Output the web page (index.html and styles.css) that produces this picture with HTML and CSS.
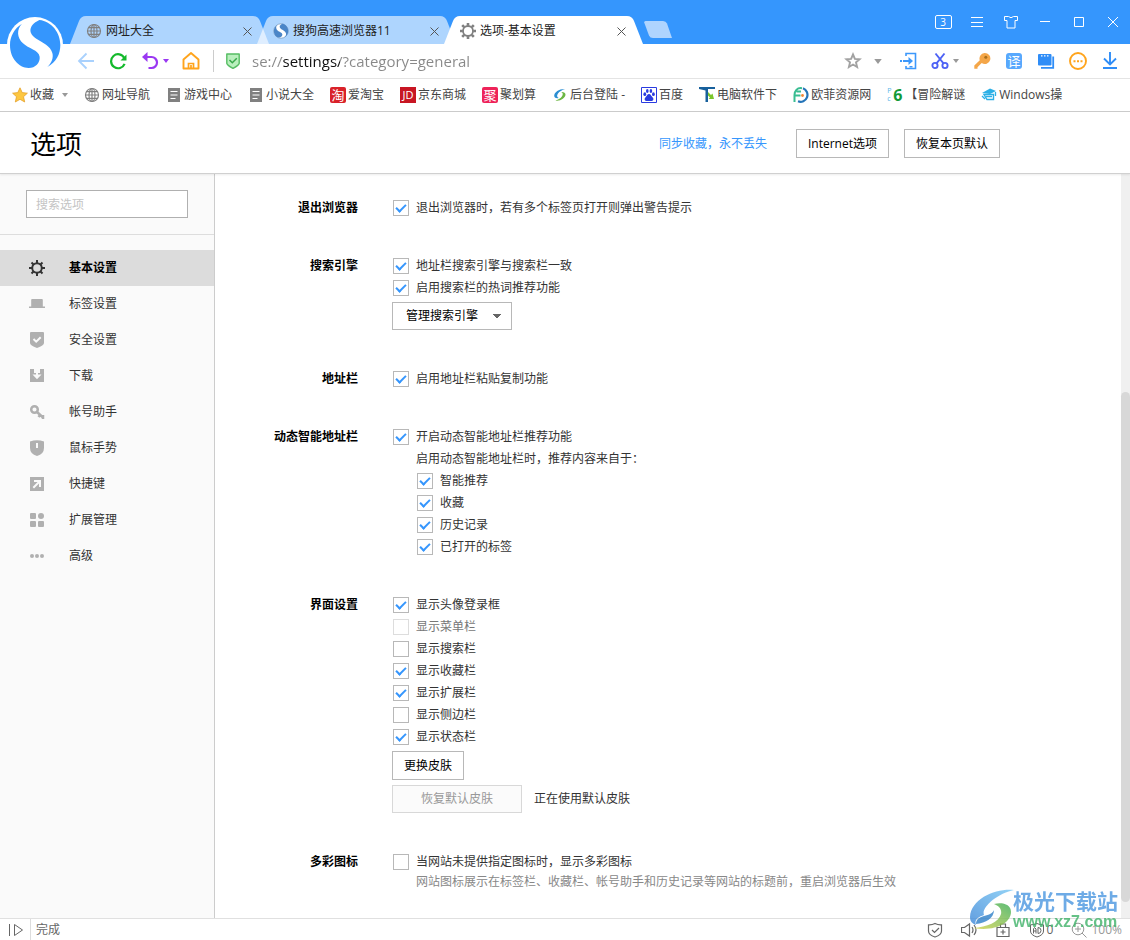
FILE: index.html
```html
<!DOCTYPE html>
<html lang="zh-CN">
<head>
<meta charset="utf-8">
<title>选项-基本设置</title>
<link rel="stylesheet" href="styles.css">
</head>
<body>
<div class="browser">
  <header class="titlebar">
    <svg class="brand" viewBox="0 0 168 168" aria-hidden="true">
      <circle cx="84" cy="84" r="84" fill="#fff"/>
      <path d="M45 20C22 34 9 58 9 84c0 40 26 68 56 69 20 0 35-16 33-34-3-20-34-24-50-40C30 62 28 38 45 20z" fill="#3596fd"/>
      <path d="M97 9c37 4 63 38 63 75 0 27-12 52-39 66 13-12 19-28 15-42-6-22-28-30-48-43-22-13-28-38 9-56z" fill="#3596fd"/>
    </svg>
    <nav class="tabs" aria-label="标签页">
      <div class="tab">
        <svg class="tab-shape" viewBox="0 0 199 28" preserveAspectRatio="none"><path d="M0 28L9 5Q11 0 16 0H183Q188 0 190 5L199 28z"/></svg>
        <svg class="i16 grey" viewBox="0 0 16 16"><g fill="none" stroke="currentColor" stroke-width="1.200"><circle cx="8" cy="8" r="6.500"/><ellipse cx="8" cy="8" rx="3" ry="6.500"/><path d="M8 1.500v13M1.500 8h13M2.500 4.600h11M2.500 11.400h11"/></g></svg>
        <span class="tab-title">网址大全</span>
        <button class="tab-close" aria-label="关闭标签"><svg viewBox="0 0 9 9"><path d="M.5.5l8 8M8.500.5l-8 8"/></svg></button>
      </div>
      <div class="tab">
        <svg class="tab-shape" viewBox="0 0 199 28" preserveAspectRatio="none"><path d="M0 28L9 5Q11 0 16 0H183Q188 0 190 5L199 28z"/></svg>
        <svg class="i16" viewBox="0 0 168 168"><circle cx="84" cy="84" r="76" fill="#fff" stroke="#7d9cc0" stroke-width="8"/><path d="M45 20C22 34 9 58 9 84c0 40 26 68 56 69 20 0 35-16 33-34-3-20-34-24-50-40C30 62 28 38 45 20z" fill="#4b86c8"/><path d="M97 9c37 4 63 38 63 75 0 27-12 52-39 66 13-12 19-28 15-42-6-22-28-30-48-43-22-13-28-38 9-56z" fill="#4b86c8"/></svg>
        <span class="tab-title">搜狗高速浏览器11</span>
        <button class="tab-close" aria-label="关闭标签"><svg viewBox="0 0 9 9"><path d="M.5.5l8 8M8.500.5l-8 8"/></svg></button>
      </div>
      <div class="tab active">
        <svg class="tab-shape" viewBox="0 0 199 28" preserveAspectRatio="none"><path d="M0 28L9 5Q11 0 16 0H183Q188 0 190 5L199 28z"/></svg>
        <svg class="i16 grey" viewBox="0 0 16 16"><g fill="none" stroke="currentColor"><circle cx="8" cy="8" r="5" stroke-width="1.800"/><path stroke-width="2.600" d="M8 0v2.800M8 13.200V16M0 8h2.800M13.200 8H16M2.200 2.200l2 2M11.800 11.800l2 2M13.800 2.200l-2 2M4.200 11.800l-2 2"/></g></svg>
        <span class="tab-title">选项-基本设置</span>
        <button class="tab-close" aria-label="关闭标签"><svg viewBox="0 0 9 9"><path d="M.5.5l8 8M8.500.5l-8 8"/></svg></button>
      </div>
      <button class="new-tab" aria-label="新建标签"><svg viewBox="0 0 28 17"><path d="M1.500 0H19q3 0 4 2.500L28 17H9q-3 0-4-2.500L.2 1.500Q0 0 1.500 0z" fill="#afd4fe"/></svg></button>
    </nav>
    <div class="window-controls">
      <button class="win-btn" aria-label="标签数"><span class="count">3</span></button>
      <button class="win-btn" aria-label="菜单"><svg viewBox="0 0 16 16"><path d="M2 3.500h12M2 8.500h12M2 12.500h12"/></svg></button>
      <button class="win-btn" aria-label="皮肤"><svg viewBox="0 0 16 16"><path d="M1.500 2.500h4q2.500 2.500 5 0h4v4h-2.500v7.500H4V6.500H1.500z"/></svg></button>
      <button class="win-btn" aria-label="最小化"><svg viewBox="0 0 16 16"><path d="M3 7.500h10"/></svg></button>
      <button class="win-btn" aria-label="最大化"><svg viewBox="0 0 16 16"><path d="M3.500 3.500h9v9h-9z"/></svg></button>
      <button class="win-btn" aria-label="关闭"><svg viewBox="0 0 16 16"><path d="M3 3l10 10M13 3L3 13"/></svg></button>
    </div>
  </header>

  <div class="toolbar">
    <div class="nav-buttons">
      <button class="tool" aria-label="后退"><svg viewBox="0 0 18 18"><path d="M9.500 1.500L2 9l7.500 7.500M2 9h15" fill="none" stroke="#a9d1fd" stroke-width="1.800"/></svg></button>
      <button class="tool" aria-label="刷新"><svg viewBox="0 0 18 18"><path d="M15.300 6A7 7 0 1 0 15.600 11.800" fill="none" stroke="#13b92b" stroke-width="2.200"/><path d="M17.500 2.500v6h-6z" fill="#13b92b"/></svg></button>
      <div class="tool-pair">
        <button class="tool" aria-label="撤销"><svg viewBox="0 0 18 18"><path d="M3 5h7.500a5.500 5.500 0 0 1 0 11H7.500" fill="none" stroke="#9a38f2" stroke-width="2.200"/><path d="M6.500 0L1 5l5.500 5z" fill="#9a38f2"/></svg></button>
        <svg class="caret purple" viewBox="0 0 6 4"><path d="M0 0h6L3 4z"/></svg>
      </div>
      <button class="tool" aria-label="主页"><svg viewBox="0 0 18 18"><path d="M1.500 7.500L9 1l7.500 6.500v9h-15z" fill="none" stroke="#ffa41c" stroke-width="1.900" stroke-linejoin="round"/><path d="M6.500 16.500v-5h5v5M9 13v3.500" fill="none" stroke="#ffa41c" stroke-width="1.700"/></svg></button>
    </div>
    <label class="address">
      <svg class="i16" viewBox="0 0 16 16"><path d="M1.800 1h12.400v9.300Q14 12 8 15.300 2 12 1.800 10.300z" fill="#b9efbd" stroke="#56bd63" stroke-width="1.400" stroke-linejoin="round"/><path d="M4.500 7l2.800 2.800 4.500-4.500" fill="none" stroke="#38a84b" stroke-width="1.500"/></svg>
      <input class="url" type="text" aria-label="地址" value="se://settings/?category=general">
    </label>
    <div class="tool-actions">
      <div class="tool-pair star-pair">
        <button class="tool" aria-label="收藏"><svg viewBox="0 0 18 18"><path d="M9 2.500l1.900 4.400 4.700.4-3.600 3.100 1.100 4.600L9 12.500 4.900 15 6 10.400 2.400 7.300l4.700-.4z" fill="none" stroke="#a2a2a2" stroke-width="1.900"/></svg></button>
        <svg class="caret wide" viewBox="0 0 6 4"><path d="M0 0h6L3 4z"/></svg>
      </div>
      <button class="tool" aria-label="发送到手机"><svg viewBox="0 0 18 18"><path d="M7 4V1.500h9.500v15H7V14" fill="none" stroke="#3c98fb" stroke-width="1.600"/><path d="M1 9h2m1 0h7" stroke="#3c98fb" stroke-width="2"/><path d="M9.500 5v8L14 9zM10.500 14h3v1.500h-3z" fill="#3c98fb"/></svg></button>
      <div class="tool-pair">
        <button class="tool" aria-label="截图"><svg viewBox="0 0 18 18"><g fill="none" stroke="#4d62f5" stroke-width="1.900"><circle cx="4" cy="13.500" r="2.600"/><circle cx="14" cy="13.500" r="2.600"/><path d="M12.500 11.300L4.500 1.500M5.500 11.300l8-9.800"/></g></svg></button>
        <svg class="caret" viewBox="0 0 6 4"><path d="M0 0h6L3 4z"/></svg>
      </div>
      <button class="tool" aria-label="密码"><svg viewBox="0 0 18 18"><path d="M11.500 1a5.500 5.500 0 1 1-2.800 10L4.500 15.300v1.400H1.300v-3.200L6.800 8.300A5.500 5.500 0 0 1 11.500 1z" fill="#f4a649"/><circle cx="12.800" cy="5.200" r="1.500" fill="#a86f1c"/></svg></button>
      <button class="tool" aria-label="翻译"><span class="translate">译</span></button>
      <button class="tool" aria-label="多窗口"><svg viewBox="0 0 18 18"><rect x="1" y="2" width="13.500" height="11.500" rx="1" fill="#2f8df7"/><path d="M4 3.800h1.500M7 3.800h1.500M10 3.800h1.500" stroke="#fff" stroke-width="1.300"/><path d="M16.200 4.500v11.300H4" fill="none" stroke="#2f8df7" stroke-width="1.800"/></svg></button>
      <button class="tool" aria-label="更多"><svg viewBox="0 0 18 18"><circle cx="9" cy="9" r="8" fill="none" stroke="#ffa41c" stroke-width="1.900"/><path d="M4.500 8.200h2v2h-2zM8 8.200h2v2H8zM11.500 8.200h2v2h-2z" fill="#ffa41c"/></svg></button>
      <button class="tool" aria-label="下载"><svg viewBox="0 0 18 18"><path d="M9 0v12.500M3 6.500l6 6 6-6M2 16h14" fill="none" stroke="#2f8df7" stroke-width="1.900"/></svg></button>
    </div>
  </div>

  <nav class="bookmarks" aria-label="收藏栏">
    <a class="bookmark favorites" href="#"><svg class="i16" viewBox="0 0 16 16"><path d="M8 .8l2.200 4.800 5.200.6-3.900 3.500 1.200 5.300L8 12.300 3.300 15l1.200-5.300L.6 6.200l5.200-.6z" fill="#fdc741" stroke="#e5a12b" stroke-width=".8"/></svg>收藏<svg class="caret" viewBox="0 0 6 4"><path d="M0 0h6L3 4z"/></svg></a>
    <a class="bookmark" href="#"><svg class="i16 grey" viewBox="0 0 16 16"><g fill="none" stroke="currentColor" stroke-width="1.200"><circle cx="8" cy="8" r="6.500"/><ellipse cx="8" cy="8" rx="3" ry="6.500"/><path d="M8 1.500v13M1.500 8h13M2.500 4.600h11M2.500 11.400h11"/></g></svg>网址导航</a>
    <a class="bookmark" href="#"><svg class="i16 grey" viewBox="0 0 16 16"><path d="M2 1h12v14H2z" fill="currentColor"/><path d="M4.500 4.500h7M4.500 8h7M4.500 11.500h5" stroke="#fff" stroke-width="1.200"/></svg>游戏中心</a>
    <a class="bookmark" href="#"><svg class="i16 grey" viewBox="0 0 16 16"><path d="M2 1h12v14H2z" fill="currentColor"/><path d="M4.500 4.500h7M4.500 8h7M4.500 11.500h5" stroke="#fff" stroke-width="1.200"/></svg>小说大全</a>
    <a class="bookmark" href="#"><span class="badge red">淘</span>爱淘宝</a>
    <a class="bookmark" href="#"><span class="badge jd">JD</span>京东商城</a>
    <a class="bookmark" href="#"><span class="badge pink">聚</span>聚划算</a>
    <a class="bookmark" href="#"><svg class="i16" viewBox="0 0 16 16"><path d="M13 2C8 1.500 2 5 2.200 9c.3 2 2.300 2.500 4.500 2C5 10 4.500 8.500 6 6.500 7.500 4.500 10 3 13 2z" fill="#2b8ed2"/><path d="M3.500 13.500C8 14.500 13.500 11 13.500 7.500c0-2-2-2.800-4.300-2.500 1.800.8 2 2.500.8 4.300-1.300 2-3.500 3.500-6.500 4.200z" fill="#6cb643"/></svg>后台登陆 -</a>
    <a class="bookmark" href="#"><svg class="i16" viewBox="0 0 16 16"><path d="M.5.5h15v15H.5z" fill="#fff" stroke="#2a3be0"/><g fill="#2a3be0"><ellipse cx="3.800" cy="7.200" rx="1.400" ry="1.900"/><ellipse cx="6.300" cy="4" rx="1.300" ry="1.900"/><ellipse cx="9.900" cy="4" rx="1.300" ry="1.900"/><ellipse cx="12.400" cy="7.200" rx="1.400" ry="1.900"/><path d="M8 7c1.700 0 2 1.800 3.300 2.900 2 1.700 1 4-.8 4H5.600c-2 0-2.700-2.300-.9-4C6 8.800 6.400 7 8 7z"/></g></svg>百度</a>
    <a class="bookmark" href="#"><svg class="i16" viewBox="0 0 16 16"><path d="M0 0h16v2H9v13H6.500V3.500L0 2z" fill="#17609c"/><path d="M9 5l3 3 1.500-1.500L15 12H9.500l1.500-1.500-2-2z" fill="#7bc52b"/></svg>电脑软件下</a>
    <a class="bookmark" href="#"><svg class="i16" viewBox="0 0 16 16"><path d="M9 1.200C4 .5 1.500 4 1.500 8v7M1.500 8.500h6M3.500 4.500H8" fill="none" stroke="#39bd91" stroke-width="2"/><path d="M10 1.300a6.800 6.800 0 0 1-5 13" fill="none" stroke="#2474b8" stroke-width="2.200"/><circle cx="9.500" cy="8.500" r="1.400" fill="#f38836"/></svg>欧菲资源网</a>
    <a class="bookmark" href="#"><span class="pc6"><small><span>P</span><span>c</span></small><b>6</b></span>【冒险解谜</a>
    <a class="bookmark" href="#"><svg class="i16" viewBox="0 0 16 16"><path d="M1 6l8-4.500L15 4l-6 3z" fill="#2cb0e6"/><path d="M3 7.500h9.500v5H6z" fill="#fff" stroke="#2cb0e6" stroke-width="1.400"/><path d="M5 9.500h6M1 9l3 3M14.500 5v4" stroke="#2cb0e6" stroke-width="1.300"/></svg>Windows操</a>
  </nav>

  <div class="page-head">
    <h1>选项</h1>
    <a class="sync" href="#">同步收藏，永不丢失</a>
    <button class="btn">Internet选项</button>
    <button class="btn">恢复本页默认</button>
  </div>

  <div class="page">
    <aside class="sidebar">
      <div class="search-box"><input class="search" type="search" aria-label="搜索选项" placeholder="搜索选项"></div>
      <nav class="menu" aria-label="设置分类">
        <a class="item current" href="#"><svg class="i16" viewBox="0 0 16 16"><g fill="none" stroke="currentColor"><circle cx="8" cy="8" r="4.800" stroke-width="2"/><path stroke-width="2" d="M8 0v3M8 13v3M0 8h3M13 8h3M2.500 2.500l2 2M11.500 11.500l2 2M13.500 2.500l-2 2M4.500 11.500l-2 2"/></g></svg>基本设置</a>
        <a class="item" href="#"><svg class="i16" viewBox="0 0 16 16"><path fill="currentColor" d="M3 3h10q.8 0 .8 1v6.500H16V12H0v-1.500h2.200V4q0-1 .8-1z"/></svg>标签设置</a>
        <a class="item" href="#"><svg class="i16" viewBox="0 0 16 16"><path fill="currentColor" d="M2 0h12q1 0 1 1v10q0 2.500-7 5-7-2.500-7-5V1q0-1 1-1z"/><path d="M4.500 7l2.700 2.700 4.500-4.500" fill="none" stroke="#fafafa" stroke-width="2"/></svg>安全设置</a>
        <a class="item" href="#"><svg class="i16" viewBox="0 0 16 16"><path fill="currentColor" d="M1 1h4v4h6V1h4v13H1z"/><path d="M7 1h2v5.500h3.500L8 11.200 3.500 6.500H7z" fill="#fafafa"/></svg>下载</a>
        <a class="item" href="#"><svg class="i16" viewBox="0 0 16 16"><circle cx="5.500" cy="5.500" r="3.300" fill="none" stroke="currentColor" stroke-width="2.500"/><path d="M8 8l6 5.500M11 11l-1.500 2M14 11v4" stroke="currentColor" stroke-width="2.500"/></svg>帐号助手</a>
        <a class="item" href="#"><svg class="i16" viewBox="0 0 16 16"><path fill="currentColor" d="M1 1.500Q8-1 15 1.500V8q0 6-7 8-7-2-7-8z"/><path d="M8 3v5" stroke="#fafafa" stroke-width="2"/></svg>鼠标手势</a>
        <a class="item" href="#"><svg class="i16" viewBox="0 0 16 16"><path fill="currentColor" d="M1 1h14v14H1z"/><path d="M5 4h7v7h-2V7.500l-5 5L3.600 11l5-5H5z" fill="#fafafa"/></svg>快捷键</a>
        <a class="item" href="#"><svg class="i16" viewBox="0 0 16 16"><g fill="currentColor"><rect x="1" y="1" width="6" height="6" rx="1"/><circle cx="12" cy="4" r="3"/><rect x="1" y="9" width="6" height="6" rx="1"/><rect x="9" y="9" width="6" height="6" rx="1"/></g></svg>扩展管理</a>
        <a class="item" href="#"><svg class="i16" viewBox="0 0 16 16"><g fill="currentColor"><circle cx="3" cy="8" r="2"/><circle cx="8" cy="8" r="2"/><circle cx="13" cy="8" r="2"/></g></svg>高级</a>
      </nav>
    </aside>

    <main class="content">
      <section class="group">
        <h2>退出浏览器</h2>
        <div class="fields">
          <label class="check"><input type="checkbox" checked>退出浏览器时，若有多个标签页打开则弹出警告提示</label>
        </div>
      </section>
      <section class="group">
        <h2>搜索引擎</h2>
        <div class="fields">
          <label class="check"><input type="checkbox" checked>地址栏搜索引擎与搜索栏一致</label>
          <label class="check"><input type="checkbox" checked>启用搜索栏的热词推荐功能</label>
          <div class="controls"><select class="engine" aria-label="管理搜索引擎"><option>管理搜索引擎</option></select></div>
        </div>
      </section>
      <section class="group">
        <h2>地址栏</h2>
        <div class="fields">
          <label class="check"><input type="checkbox" checked>启用地址栏粘贴复制功能</label>
        </div>
      </section>
      <section class="group">
        <h2>动态智能地址栏</h2>
        <div class="fields">
          <label class="check"><input type="checkbox" checked>开启动态智能地址栏推荐功能</label>
          <div class="nested">
            <p>启用动态智能地址栏时，推荐内容来自于：</p>
            <label class="check"><input type="checkbox" checked>智能推荐</label>
            <label class="check"><input type="checkbox" checked>收藏</label>
            <label class="check"><input type="checkbox" checked>历史记录</label>
            <label class="check"><input type="checkbox" checked>已打开的标签</label>
          </div>
        </div>
      </section>
      <section class="group">
        <h2>界面设置</h2>
        <div class="fields">
          <label class="check"><input type="checkbox" checked>显示头像登录框</label>
          <label class="check off"><input type="checkbox" disabled>显示菜单栏</label>
          <label class="check"><input type="checkbox">显示搜索栏</label>
          <label class="check"><input type="checkbox" checked>显示收藏栏</label>
          <label class="check"><input type="checkbox" checked>显示扩展栏</label>
          <label class="check"><input type="checkbox">显示侧边栏</label>
          <label class="check"><input type="checkbox" checked>显示状态栏</label>
          <div class="controls">
            <button class="btn">更换皮肤</button>
            <div class="skin-row"><button class="btn restore" disabled>恢复默认皮肤</button><span>正在使用默认皮肤</span></div>
          </div>
        </div>
      </section>
      <section class="group">
        <h2>多彩图标</h2>
        <div class="fields">
          <label class="check"><input type="checkbox">当网站未提供指定图标时，显示多彩图标</label>
          <p class="hint nested">网站图标展示在标签栏、收藏栏、帐号助手和历史记录等网站的标题前，重启浏览器后生效</p>
        </div>
      </section>
    </main>
    <div class="scrollbar" aria-hidden="true"><div class="thumb"></div></div>
  </div>

  <footer class="statusbar">
    <button class="side-toggle" aria-label="侧边栏"><svg class="i16" viewBox="0 0 16 16"><path d="M1.500 2v12M6.500 2.500v11L14.500 8z" fill="none" stroke="currentColor"/></svg></button>
    <span class="state">完成</span>
    <div class="indicators">
      <svg class="i16" viewBox="0 0 16 16"><path d="M8 1.500q3 1.500 6.500 1.300V9q0 4-6.500 6-6.500-2-6.500-6V2.800Q5 3 8 1.500z" fill="none" stroke="currentColor" stroke-width="1.200"/><path d="M5 8l2.500 2.500L12 6" fill="none" stroke="currentColor" stroke-width="1.200"/></svg>
      <svg class="i16" viewBox="0 0 16 16"><path d="M.5 5.500h3L8.500 2v12l-5-3.500h-3zM11 5q2 3 0 6M13 3q4 5 0 10" fill="none" stroke="currentColor" stroke-width="1.200"/></svg>
      <svg class="i16" viewBox="0 0 16 16"><path d="M2 5.500h12v9H2zM5.500 5.500V2h5v3.500M8 7.500v5M5.500 10h5" fill="none" stroke="currentColor" stroke-width="1.200"/></svg>
      <span class="adblock"><svg class="i16" viewBox="0 0 16 16"><path d="M8 1.500q3 1.500 6.500 1.300V9q0 4-6.500 6-6.500-2-6.500-6V2.800Q5 3 8 1.500z" fill="none" stroke="currentColor"/><path d="M4.500 11.500V7l1-1.500L7 7v4.500M4.500 9H7M9 5.500v6q3 0 3-3t-3-3z" fill="none" stroke="currentColor"/></svg>0</span>
      <span class="zoom"><svg class="i16" viewBox="0 0 16 16"><path d="M11 11l4.500 4.500M7 4v6M4 7h6" stroke="currentColor" fill="none"/><circle cx="7" cy="7" r="5.800" fill="none" stroke="currentColor"/></svg>100%</span>
    </div>
  </footer>

  <div class="watermark">
    <svg class="swirl" viewBox="0 0 46 42">
      <defs>
        <linearGradient id="sky" x1="0" y1="1" x2="1" y2="0"><stop offset="0" stop-color="#3b86d8"/><stop offset="1" stop-color="#79c8f4"/></linearGradient>
        <linearGradient id="leaf" x1="0" y1="1" x2="1" y2="0"><stop offset="0" stop-color="#d9d34a"/><stop offset="1" stop-color="#38ad55"/></linearGradient>
      </defs>
      <path d="M45 1C28-1 2 9 1 28c0 5 3 7 6 8-2-5 2-8 8-10-3-7 12-21 30-25z" fill="url(#sky)"/>
      <path d="M25 15c8-2 17 0 17 8 0 11-16 20-38 16 14-1 26-6 28-14 1-5-2-8-7-10z" fill="url(#leaf)"/>
      <path d="M25 21c0 8-8 13-18 14 0-5 4-7 8-8 5-1 9-3 10-6z" fill="#2e7fc9"/>
    </svg>
    <div class="mark-text"><strong>极光下载站</strong><em>www.xz7.com</em></div>
  </div>
</div>
</body>
</html>
```

FILE: styles.css
```css
* {
  box-sizing: border-box;
}

body {
  margin: 0;
  background: #fff;
  color: #333;
  font: 12px/22px "Open Sans", "Noto Sans CJK SC", sans-serif;
}

a {
  color: inherit;
  text-decoration: none;
}

button,
input,
select {
  margin: 0;
  padding: 0;
  border: 0;
  background: none;
  color: inherit;
  font: inherit;
}

h1,
h2,
p {
  margin: 0;
}

svg {
  display: block;
  flex: none;
}

.browser {
  position: relative;
  display: flex;
  flex-direction: column;
  min-height: 100vh;
}

.i16 {
  width: 16px;
  height: 16px;
}

.grey {
  color: #808080;
}

.caret {
  width: 6px;
  height: 4px;
  fill: #999;
}

.caret.wide {
  width: 8px;
  height: 5px;
}

.caret.purple {
  fill: #9a38f2;
}

/* Title bar */

.titlebar {
  position: relative;
  display: flex;
  height: 44px;
  padding-left: 70px;
  background: #3596fd;
}

.brand {
  position: absolute;
  z-index: 2;
  top: 17px;
  left: 7px;
  width: 56px;
  height: 56px;
}

.tabs {
  display: flex;
  flex: 1;
  align-items: flex-end;
}

.tab {
  position: relative;
  display: flex;
  align-items: center;
  width: 199px;
  height: 28px;
  margin-right: -12px;
  padding: 2px 17px 0 16px;
  color: #222;
}

.tab-shape {
  position: absolute;
  top: 0;
  left: 0;
  width: 100%;
  height: 100%;
  fill: rgba(255, 255, 255, 0.6);
}

.tab.active .tab-shape {
  fill: #fff;
}

.tab > :not(.tab-shape) {
  position: relative;
}

.tab-title {
  flex: 1;
  margin-left: 4px;
}

.tab-close {
  width: 9px;
  height: 9px;
}

.tab-close svg {
  width: 9px;
  height: 9px;
  stroke: #555;
}

.new-tab {
  align-self: center;
  width: 28px;
  height: 17px;
  margin: 15px 0 0 13px;
}

.new-tab svg {
  width: 28px;
  height: 17px;
}

.window-controls {
  display: flex;
  color: #fff;
}

.win-btn {
  display: flex;
  align-items: center;
  justify-content: center;
  width: 34px;
  height: 44px;
}

.win-btn svg {
  width: 16px;
  height: 16px;
  fill: none;
  stroke: #fff;
}

.count {
  width: 17px;
  border: 1px solid #fff;
  border-radius: 2px;
  font-size: 10px;
  line-height: 12px;
}

/* Toolbar */

.toolbar {
  display: flex;
  align-items: center;
  height: 35px;
  padding: 0 11px 0 77px;
  border-bottom: 1px solid #e4e4e4;
}

.tool {
  width: 18px;
  height: 18px;
}

.tool svg {
  width: 18px;
  height: 18px;
}

.nav-buttons {
  display: flex;
  align-items: center;
  gap: 14px;
  height: 22px;
  padding-right: 13px;
  border-right: 1px solid #ccc;
}

.tool-pair {
  display: flex;
  align-items: center;
  gap: 4px;
}

.nav-buttons .tool-pair {
  margin-right: -1px;
}

.address {
  display: flex;
  flex: 1;
  align-items: center;
  gap: 11px;
  margin-left: 11px;
}

.url {
  flex: 1;
  min-width: 0;
  height: 22px;
  background: linear-gradient(90deg, #888 30px, #111 30px, #111 88px, #888 88px);
  -webkit-background-clip: text;
  background-clip: text;
  color: #888;
  font-size: 15px;
  outline: 0;
  -webkit-text-fill-color: transparent;
}

.tool-actions {
  display: flex;
  align-items: center;
  gap: 14px;
}

.star-pair {
  gap: 12px;
  margin-right: 3px;
}

.translate {
  display: block;
  width: 16px;
  height: 16px;
  margin: 1px;
  border-radius: 3px;
  background: #58a8fd;
  color: #fff;
  font-size: 13px;
  line-height: 16px;
}

/* Bookmarks */

.bookmarks {
  display: flex;
  align-items: center;
  gap: 16px;
  height: 33px;
  padding-left: 12px;
  border-bottom: 1px solid #ccc;
  color: #444;
  white-space: nowrap;
}

.bookmark {
  display: flex;
  flex: none;
  align-items: center;
  gap: 2px;
}

.favorites .caret {
  margin-left: 6px;
}

.badge {
  width: 16px;
  height: 16px;
  border-radius: 2px;
  background: #d9222a;
  color: #fff;
  font-size: 13px;
  line-height: 16px;
  text-align: center;
}

.badge.jd {
  border-radius: 0;
  background: #c81623;
  font-size: 11px;
}

.badge.pink {
  background: #ee2359;
}

.pc6 {
  display: flex;
  align-items: center;
  width: 16px;
  color: #129a37;
}

.pc6 small {
  display: grid;
  width: 6px;
  color: #58b5e8;
  font-size: 7px;
  line-height: 8px;
}

.pc6 b {
  font-size: 16px;
  line-height: 16px;
}

/* Page heading */

.page-head {
  position: relative;
  display: flex;
  align-items: center;
  height: 62px;
  padding: 2px 130px 0 30px;
  border-bottom: 1px solid #d0d0d0;
  box-shadow: 0 1px 2px rgba(0, 0, 0, 0.08);
}

h1 {
  flex: 1;
  color: #000;
  font-size: 26px;
  font-weight: 400;
  line-height: 36px;
}

.sync {
  margin-right: 14px;
  color: #3596fd;
}

.btn {
  height: 29px;
  padding: 0 11px;
  border: 1px solid #b8b8b8;
  background: #fff;
  color: #000;
}

.page-head .btn {
  margin-left: 15px;
}

/* Settings page */

.page {
  display: flex;
  flex: 1;
}

.sidebar {
  flex: none;
  width: 215px;
  border-right: 1px solid #ccc;
  background: #fafafa;
}

.search-box {
  padding: 16px 26px;
  border-bottom: 1px solid #ddd;
}

.search {
  display: block;
  width: 100%;
  height: 28px;
  padding: 0 9px;
  border: 1px solid #b0b0b0;
  background: #fff;
}

.search::placeholder {
  color: #c4c4c4;
  opacity: 1;
}

.menu {
  padding-top: 15px;
}

.item {
  display: flex;
  align-items: center;
  gap: 24px;
  height: 36px;
  padding-left: 29px;
}

.item svg {
  color: #b0b0b0;
}

.item.current {
  background: #dcdcdc;
  color: #000;
  font-weight: 700;
}

.item.current svg {
  color: #333;
}

.content {
  flex: 1;
  padding-top: 23px;
}

.group {
  display: grid;
  grid-template-columns: 143px 1fr;
  gap: 34px;
  margin-bottom: 36px;
}

.group:last-child {
  margin-bottom: 0;
}

h2 {
  color: #000;
  font-size: 12px;
  font-weight: 700;
  line-height: 22px;
  text-align: right;
}

.check {
  display: flex;
  align-items: center;
  gap: 7px;
  width: max-content;
  height: 22px;
  padding-left: 1px;
}

.check input {
  display: grid;
  place-items: center;
  width: 16px;
  height: 16px;
  border: 1px solid #b8b8b8;
  background: #fff;
  appearance: none;
}

.check input:checked::before {
  width: 8px;
  height: 4px;
  margin-bottom: 2px;
  border: solid #3596fd;
  border-width: 0 0 2px 2px;
  content: "";
  transform: rotate(-45deg);
}

.check.off {
  color: #777;
}

.check.off input {
  border-color: #ddd;
}

.nested {
  padding-left: 24px;
}

.controls {
  padding: 3px 0 2px;
}

.engine {
  display: block;
  width: 120px;
  height: 28px;
  padding-left: 13px;
  border: 1px solid #b8b8b8;
  background: conic-gradient(from -40deg at 50% 100%, #666 80deg, transparent 0) right 10px center / 8px 5px no-repeat #fff;
  color: #000;
  appearance: none;
}

.skin-row {
  display: flex;
  align-items: center;
  gap: 12px;
  margin-top: 5px;
}

.controls .btn {
  display: block;
}

.controls .restore {
  width: 130px;
  height: 28px;
  border-color: #d8d8d8;
  background: #fbfbfb;
  color: #999;
}

.hint {
  color: #888;
  line-height: 18px;
}

.scrollbar {
  display: flex;
  flex: none;
  flex-direction: column;
  justify-content: flex-end;
  width: 9px;
  padding-bottom: 16px;
  background: #f0f0f0;
}

.thumb {
  height: 70%;
  border-radius: 5px;
  background: #d8d8d8;
}

/* Status bar */

.statusbar {
  display: flex;
  align-items: center;
  height: 22px;
  padding: 0 8px;
  border-top: 1px solid #e0e0e0;
  color: #666;
}

.side-toggle {
  align-self: stretch;
  padding-right: 6px;
  border-right: 1px solid #ddd;
}

.state {
  flex: 1;
  margin-left: 5px;
}

.indicators {
  display: flex;
  align-items: center;
  gap: 18px;
}

.adblock,
.zoom {
  display: flex;
  align-items: center;
  gap: 2px;
}

.zoom {
  gap: 4px;
  color: #999;
}

/* Site mark over the lower right corner */

.watermark {
  position: absolute;
  right: 12px;
  bottom: 9px;
  display: flex;
  align-items: center;
  opacity: 0.8;
  pointer-events: none;
}

.swirl {
  width: 46px;
  height: 42px;
}

.mark-text {
  display: flex;
  flex-direction: column;
  margin-left: -2px;
}

.mark-text strong {
  color: #4a97e0;
  font-size: 21px;
  line-height: 24px;
}

.mark-text em {
  color: #3fb269;
  font: bold 16px/18px "Liberation Sans", sans-serif;
}
```
